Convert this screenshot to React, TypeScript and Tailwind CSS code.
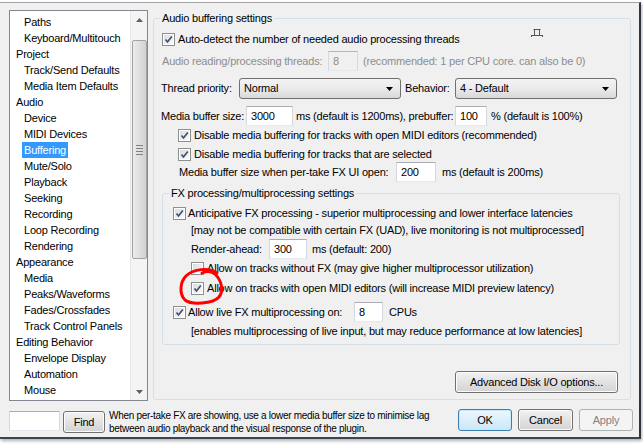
import React from 'react';

const tree: [string, number][] = [
  ['Paths', 1],
  ['Keyboard/Multitouch', 1],
  ['Project', 0],
  ['Track/Send Defaults', 1],
  ['Media Item Defaults', 1],
  ['Audio', 0],
  ['Device', 1],
  ['MIDI Devices', 1],
  ['Buffering', 1],
  ['Mute/Solo', 1],
  ['Playback', 1],
  ['Seeking', 1],
  ['Recording', 1],
  ['Loop Recording', 1],
  ['Rendering', 1],
  ['Appearance', 0],
  ['Media', 1],
  ['Peaks/Waveforms', 1],
  ['Fades/Crossfades', 1],
  ['Track Control Panels', 1],
  ['Editing Behavior', 0],
  ['Envelope Display', 1],
  ['Automation', 1],
  ['Mouse', 1],
];

function Check({ checked = true }: { checked?: boolean }) {
  return (
    <span className="w-[13px] h-[13px] shrink-0 border border-[#8e8f8f] bg-white p-[1px] flex">
      <span className="flex-1 bg-linear-to-br from-[#dcdcdc] to-[#fbfbfb] flex items-center justify-center">
        {checked && (
          <svg width="9" height="9" viewBox="0 0 9 9">
            <path d="M1.5 4.5 L3.5 7 L7.8 1.5" fill="none" stroke="#3e4f7a" strokeWidth="1.7" />
          </svg>
        )}
      </span>
    </span>
  );
}

function Field({ value, w, disabled }: { value: string; w: string; disabled?: boolean }) {
  return (
    <span
      className={`${w} h-[20px] shrink-0 border border-[#abadb3] border-x-[#d5d9df] border-b-[#e3e9ef] flex items-center pl-[4px] ${
        disabled ? 'bg-[#f0f0f0] text-[#8d8d8d] border-[#b6b6b6]' : 'bg-white'
      }`}
    >
      {value}
    </span>
  );
}

function Combo({ value }: { value: string }) {
  return (
    <span className="w-[162px] h-[21px] shrink-0 border border-[#707070] rounded-[3px] bg-linear-to-b from-[#f3f3f3] via-[#ebebeb] to-[#d8d8d8] flex items-center pl-[4px] pr-[7px]">
      <span className="flex-1">{value}</span>
      <svg width="7" height="4" viewBox="0 0 7 4">
        <path d="M0 0 H7 L3.5 4 Z" fill="#000" />
      </svg>
    </span>
  );
}

function Btn({ label, w, kind }: { label: string; w: string; kind?: 'default' | 'disabled' }) {
  const look =
    kind === 'default'
      ? 'border-[#3c7fb1] from-[#eef7fd] to-[#c9e7f8] text-black shadow-[inset_0_0_0_1px_#c6e8fb]'
      : kind === 'disabled'
        ? 'border-[#adb2b5] from-[#f4f4f4] to-[#f4f4f4] text-[#838383]'
        : 'border-[#707070] from-[#f2f2f2] to-[#d3d3d3] text-black shadow-[inset_0_0_0_1px_#fcfcfc]';
  return (
    <span className={`${w} h-[22px] shrink-0 border rounded-[3px] bg-linear-to-b ${look} flex items-center justify-center`}>
      {label}
    </span>
  );
}

export default function App() {
  return (
    <div className="w-[643px] h-[445px] bg-white overflow-hidden text-[11px] tracking-[-0.2px] whitespace-nowrap text-black font-['Liberation_Sans',Arial,sans-serif] leading-[13px]">
      <div className="w-[641px] h-[437px] mt-[2px] bg-[#f0f0f0] border-t border-t-[#a3a3a3] border-r-2 border-r-[#2f3640] border-b-2 border-b-[#3a4656] shadow-[1px_2px_3px_rgba(0,0,0,0.3)] flex flex-col">
        <div className="flex h-[398px]">
          {/* Tree list */}
          <div className="ml-[9px] mt-[7px] w-[139px] h-[391px] border border-[#828790] bg-white flex">
            <div className="flex-1 pt-[3px]">
              {tree.map(([name, lvl]) =>
                name === 'Buffering' ? (
                  <div key={name} className="h-[16px] leading-[16px] pl-[12px]">
                    <span className="bg-[#3399ff] text-white px-[2px] inline-block">{name}</span>
                  </div>
                ) : (
                  <div key={name} className={`h-[16px] leading-[16px] ${lvl ? 'pl-[14px]' : 'pl-[6px]'}`}>
                    {name}
                  </div>
                ),
              )}
            </div>
            {/* Scrollbar */}
            <div className="w-[17px] bg-[#f4f4f4] border-l border-[#e6e6e6] flex flex-col items-center">
              <div className="h-[17px] flex items-center justify-center">
                <svg width="7" height="4" viewBox="0 0 7 4">
                  <path d="M0 4 H7 L3.5 0 Z" fill="#606060" />
                </svg>
              </div>
              <div className="mt-[12px] w-[15px] h-[219px] rounded-[2px] border border-[#a3a3a3] bg-linear-to-r from-[#ececec] to-[#d2d2d2] flex flex-col items-center justify-center gap-[2px]">
                <span className="w-[7px] h-px bg-[#808080]" />
                <span className="w-[7px] h-px bg-[#808080]" />
                <span className="w-[7px] h-px bg-[#808080]" />
                <span className="w-[7px] h-px bg-[#808080]" />
              </div>
              <div className="flex-1" />
              <div className="h-[17px] flex items-center justify-center">
                <svg width="7" height="4" viewBox="0 0 7 4">
                  <path d="M0 0 H7 L3.5 4 Z" fill="#606060" />
                </svg>
              </div>
            </div>
          </div>

          {/* Audio buffering settings */}
          <div className="ml-[5px] mt-[15px] w-[478px] h-[382px] border border-[#d5dfe5] rounded-[3px] relative flex flex-col">
            <div className="-mt-[8px] ml-[6px] px-[2px] w-fit bg-[#f0f0f0] leading-[14px]">Audio buffering settings</div>
            <svg className="absolute left-[376px] top-[9px]" width="14" height="10" viewBox="0 0 14 10">
              <path d="M3.5 1.5 H10.5 M4.5 1.5 V7.5 M9.5 1.5 V7.5 M1 7.5 H13 M1.5 7.5 V9 M12.5 7.5 V9" fill="none" stroke="#555" strokeWidth="1" />
            </svg>

            <div className="mt-[5px] h-[18px] pl-[8px] flex items-center gap-[3px]">
              <Check />
              <span>Auto-detect the number of needed audio processing threads</span>
            </div>

            <div className="mt-[3px] h-[20px] pl-[8px] flex items-center text-[#8d8d8d]">
              <span className="w-[166px]">Audio reading/processing threads:</span>
              <Field value="8" w="w-[30px]" disabled />
              <span className="ml-[5px]">(recommended: 1 per CPU core. can also be 0)</span>
            </div>

            <div className="mt-[7px] h-[21px] pl-[7px] flex items-center">
              <span className="w-[78px]">Thread priority:</span>
              <Combo value="Normal" />
              <span className="ml-[4px] w-[50px]">Behavior:</span>
              <Combo value="4 - Default" />
            </div>

            <div className="mt-[7px] h-[20px] pl-[7px] flex items-center">
              <span className="w-[85px]">Media buffer size:</span>
              <Field value="3000" w="w-[47px]" />
              <span className="ml-[3px] w-[159px]">ms (default is 1200ms), prebuffer:</span>
              <Field value="100" w="w-[32px]" />
              <span className="ml-[4px]">% (default is 100%)</span>
            </div>

            <div className="mt-[1px] h-[16px] pl-[24px] flex items-center gap-[3px]">
              <Check />
              <span>Disable media buffering for tracks with open MIDI editors (recommended)</span>
            </div>
            <div className="mt-[3px] h-[16px] pl-[24px] flex items-center gap-[3px]">
              <Check />
              <span>Disable media buffering for tracks that are selected</span>
            </div>

            <div className="h-[20px] pl-[25px] flex items-center">
              <span className="w-[217px]">Media buffer size when per-take FX UI open:</span>
              <Field value="200" w="w-[40px]" />
              <span className="ml-[6px]">ms (default is 200ms)</span>
            </div>

            {/* FX processing */}
            <div className="mt-[11px] ml-[8px] w-[458px] h-[152px] border border-[#d5dfe5] rounded-[3px] relative flex flex-col">
              <div className="-mt-[8px] ml-[6px] px-[2px] w-fit bg-[#f0f0f0] leading-[14px]">FX processing/multiprocessing settings</div>

              <div className="mt-[5px] h-[16px] pl-[10px] flex items-center gap-[2px]">
                <Check />
                <span>Anticipative FX processing - superior multiprocessing and lower interface latencies</span>
              </div>
              <div className="mt-[1px] h-[16px] pl-[28px] flex items-center">
                [may not be compatible with certain FX (UAD), live monitoring is not multiprocessed]
              </div>
              <div className="mt-[1px] h-[20px] pl-[28px] flex items-center">
                <span className="w-[78px]">Render-ahead:</span>
                <Field value="300" w="w-[38px]" />
                <span className="ml-[5px]">ms (default: 200)</span>
              </div>
              <div className="mt-[1px] h-[16px] pl-[28px] flex items-center gap-[3px]">
                <Check checked={false} />
                <span>Allow on tracks without FX (may give higher multiprocessor utilization)</span>
              </div>
              <div className="mt-[4px] h-[16px] pl-[28px] flex items-center gap-[3px]">
                <Check />
                <span>Allow on tracks with open MIDI editors (will increase MIDI preview latency)</span>
              </div>
              <div className="mt-[6px] h-[20px] pl-[10px] flex items-center gap-[2px]">
                <Check />
                <span className="w-[164px]">Allow live FX multiprocessing on:</span>
                <Field value="8" w="w-[29px]" />
                <span className="ml-[4px]">CPUs</span>
              </div>
              <div className="mt-[1px] h-[16px] pl-[28px] flex items-center">
                [enables multiprocessing of live input, but may reduce performance at low latencies]
              </div>

              <svg className="absolute left-[14px] top-[71px]" width="50" height="42" viewBox="0 0 50 42">
                <path
                  d="M40 8 C32 2, 16 4, 9 11 C3 17, 2 29, 8 35 C14 40, 36 39, 42 32 C46 27, 46 17, 38 9 C34 6, 29 6, 25 8"
                  fill="none"
                  stroke="#ff0000"
                  strokeWidth="3"
                  strokeLinecap="round"
                />
              </svg>
            </div>

            <div className="mt-[26px] flex justify-end pr-[12px]">
              <Btn label="Advanced Disk I/O options..." w="w-[163px]" />
            </div>
          </div>
        </div>

        {/* Bottom bar */}
        <div className="mt-[8px] flex items-start">
          <span className="ml-[9px] mt-[2px] w-[51px] h-[20px] bg-white border border-[#abadb3] border-x-[#d5d9df] border-b-[#e3e9ef]" />
          <span className="ml-[3px] mt-[2px]">
            <Btn label="Find" w="w-[42px]" />
          </span>
          <div className="ml-[4px] text-[10px] tracking-[-0.3px] leading-[13px] w-[345px]">
            <div>When per-take FX are showing, use a lower media buffer size to minimise lag</div>
            <div>between audio playback and the visual response of the plugin.</div>
          </div>
          <div className="flex gap-[6px] ml-[4px]">
            <Btn label="OK" w="w-[54px]" kind="default" />
            <Btn label="Cancel" w="w-[55px]" />
            <Btn label="Apply" w="w-[54px]" kind="disabled" />
          </div>
        </div>
      </div>
    </div>
  );
}
